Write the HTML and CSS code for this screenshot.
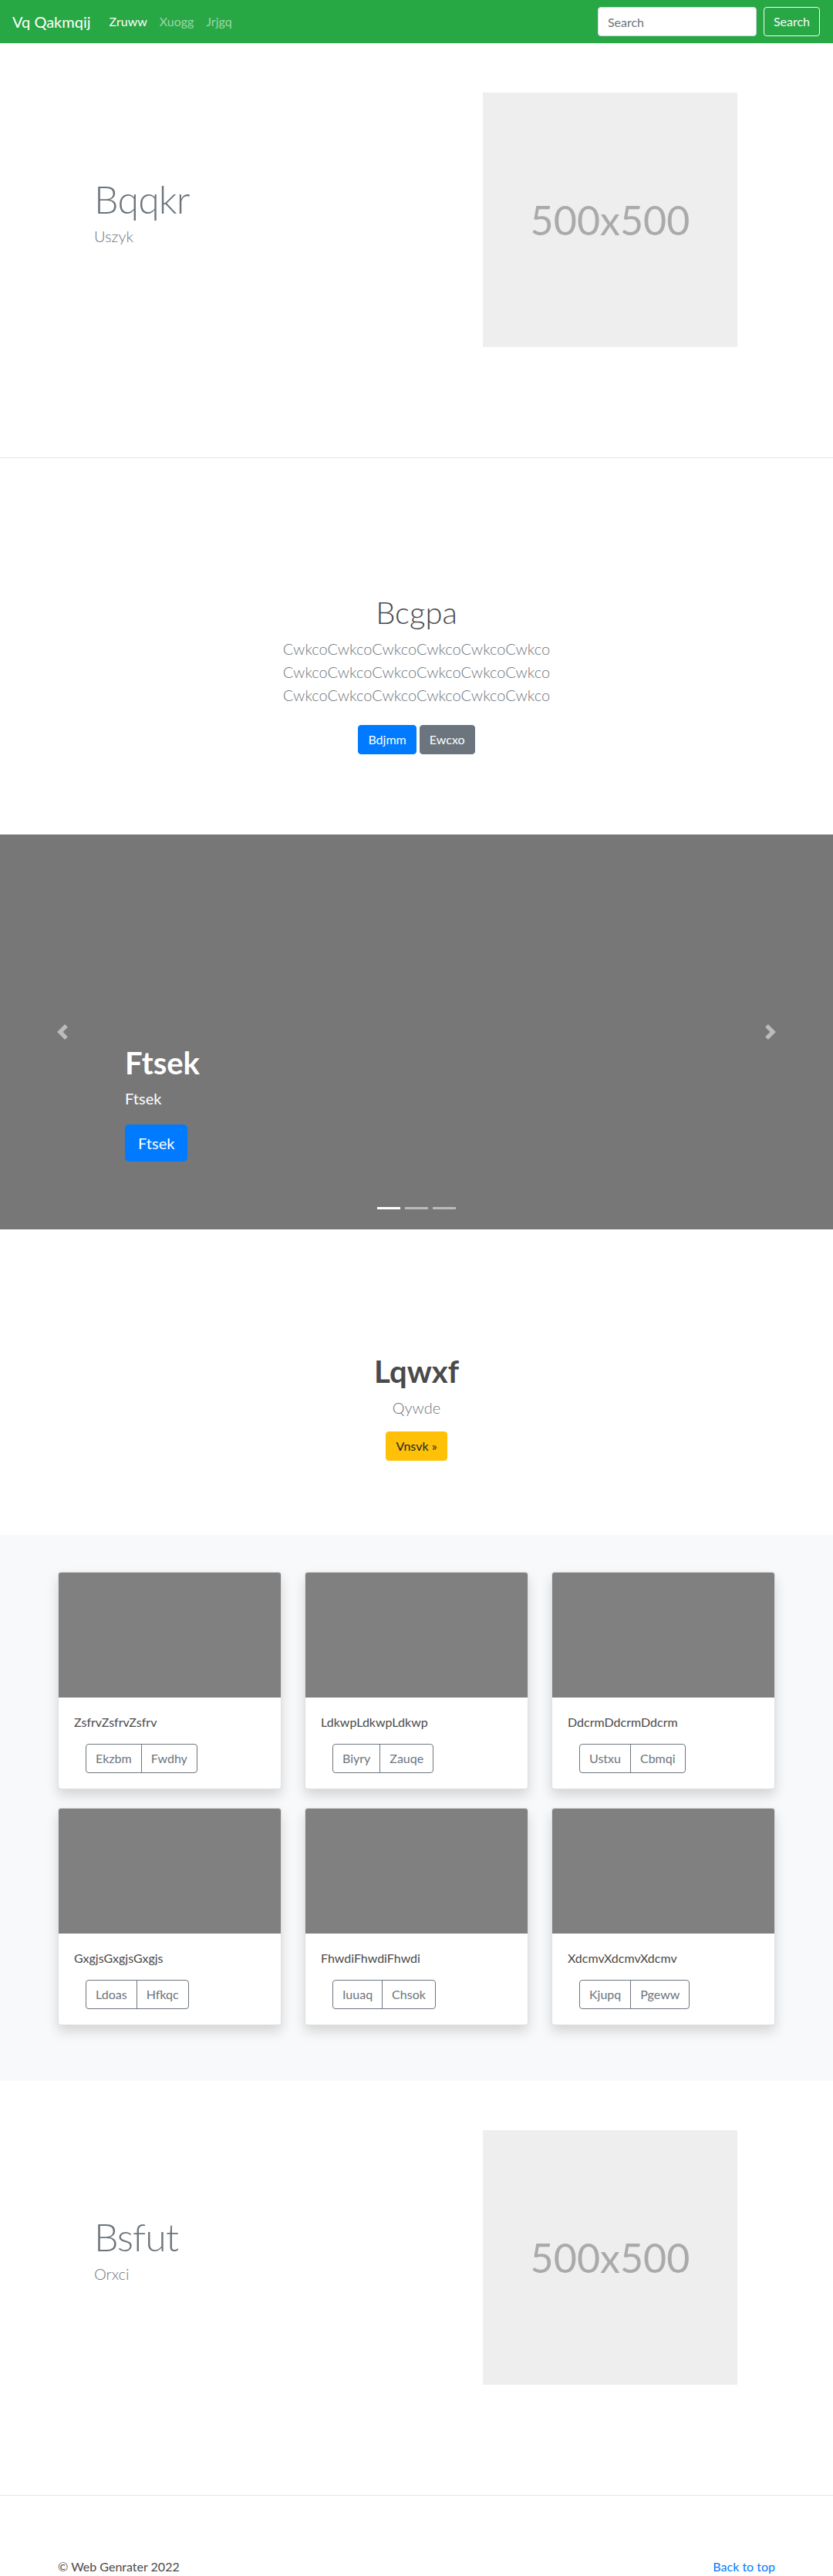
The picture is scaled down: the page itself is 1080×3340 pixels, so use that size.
FILE: index.html
```html
<!DOCTYPE html>
<html lang="en">
<head>
<meta charset="utf-8">
<title>Vq Qakmqij</title>
<link rel="stylesheet" href="styles.css">
</head>
<body>
<nav class="navbar">
  <a class="brand" href="#">Vq Qakmqij</a>
  <ul class="nav">
    <li><a class="active" href="#">Zruww</a></li>
    <li><a href="#">Xuogg</a></li>
    <li><a href="#">Jrjgq</a></li>
  </ul>
  <form class="search">
    <input class="search-input" type="text" placeholder="Search">
    <button class="btn btn-outline-light" type="button">Search</button>
  </form>
</nav>

<section class="featurette">
  <div class="container feat-row">
    <div class="feat-text">
      <h2 class="feat-heading">Bqqkr</h2>
      <p class="lead muted">Uszyk</p>
    </div>
    <div class="placeholder">500x500</div>
  </div>
</section>

<hr class="divider">

<section class="jumbotron">
  <div class="container center">
    <h1 class="jumbo-heading">Bcgpa</h1>
    <p class="lead muted">CwkcoCwkcoCwkcoCwkcoCwkcoCwkco<br>CwkcoCwkcoCwkcoCwkcoCwkcoCwkco<br>CwkcoCwkcoCwkcoCwkcoCwkcoCwkco</p>
    <p class="jumbo-actions"><a class="btn btn-primary" href="#">Bdjmm</a> <a class="btn btn-secondary" href="#">Ewcxo</a></p>
  </div>
</section>

<div class="carousel">
  <ol class="indicators">
    <li class="active"></li>
    <li></li>
    <li></li>
  </ol>
  <div class="caption">
    <h1 class="caption-title">Ftsek</h1>
    <p class="caption-text">Ftsek</p>
    <p class="caption-action"><a class="btn btn-lg btn-primary" href="#">Ftsek</a></p>
  </div>
  <a class="control control-prev" href="#">
    <svg width="20" height="20" viewBox="0 0 8 8"><path fill="#fff" d="M5.25 0l-4 4 4 4 1.5-1.5L4.25 4l2.5-2.5L5.25 0z"/></svg>
  </a>
  <a class="control control-next" href="#">
    <svg width="20" height="20" viewBox="0 0 8 8"><path fill="#fff" d="M2.75 0l-1.5 1.5L3.75 4l-2.5 2.5L2.75 8l4-4-4-4z"/></svg>
  </a>
</div>

<section class="callout">
  <div class="container center">
    <h1 class="callout-heading">Lqwxf</h1>
    <p class="lead muted">Qywde</p>
    <p class="callout-action"><a class="btn btn-warning" href="#">Vnsvk &raquo;</a></p>
  </div>
</section>

<section class="album">
  <div class="container card-grid">
    <div class="card">
      <div class="card-img"></div>
      <div class="card-body">
        <p class="card-text">ZsfrvZsfrvZsfrv</p>
        <div class="btn-group"><a class="btn btn-outline-secondary" href="#">Ekzbm</a><a class="btn btn-outline-secondary" href="#">Fwdhy</a></div>
      </div>
    </div>
    <div class="card">
      <div class="card-img"></div>
      <div class="card-body">
        <p class="card-text">LdkwpLdkwpLdkwp</p>
        <div class="btn-group"><a class="btn btn-outline-secondary" href="#">Biyry</a><a class="btn btn-outline-secondary" href="#">Zauqe</a></div>
      </div>
    </div>
    <div class="card">
      <div class="card-img"></div>
      <div class="card-body">
        <p class="card-text">DdcrmDdcrmDdcrm</p>
        <div class="btn-group"><a class="btn btn-outline-secondary" href="#">Ustxu</a><a class="btn btn-outline-secondary" href="#">Cbmqi</a></div>
      </div>
    </div>
    <div class="card">
      <div class="card-img"></div>
      <div class="card-body">
        <p class="card-text">GxgjsGxgjsGxgjs</p>
        <div class="btn-group"><a class="btn btn-outline-secondary" href="#">Ldoas</a><a class="btn btn-outline-secondary" href="#">Hfkqc</a></div>
      </div>
    </div>
    <div class="card">
      <div class="card-img"></div>
      <div class="card-body">
        <p class="card-text">FhwdiFhwdiFhwdi</p>
        <div class="btn-group"><a class="btn btn-outline-secondary" href="#">Iuuaq</a><a class="btn btn-outline-secondary" href="#">Chsok</a></div>
      </div>
    </div>
    <div class="card">
      <div class="card-img"></div>
      <div class="card-body">
        <p class="card-text">XdcmvXdcmvXdcmv</p>
        <div class="btn-group"><a class="btn btn-outline-secondary" href="#">Kjupq</a><a class="btn btn-outline-secondary" href="#">Pgeww</a></div>
      </div>
    </div>
  </div>
</section>

<section class="featurette">
  <div class="container feat-row">
    <div class="feat-text">
      <h2 class="feat-heading">Bsfut</h2>
      <p class="lead muted">Orxci</p>
    </div>
    <div class="placeholder">500x500</div>
  </div>
</section>

<hr class="divider">

<footer class="container footer">
  <p class="back"><a href="#">Back to top</a></p>
  <p class="copy">&copy; Web Genrater 2022</p>
</footer>
</body>
</html>
```

FILE: styles.css
```css
* { box-sizing: border-box; }
html, body { margin: 0; padding: 0; }
body {
  font-family: Lato, "Noto Sans", "Liberation Sans", sans-serif;
  font-size: 16px;
  line-height: 1.5;
  color: #4a4a4a;
  background: #fff;
}
h1, h2, p { margin: 0; }
a { text-decoration: none; }

.container { width: 960px; margin: 0 auto; padding: 0 15px; }
.center { text-align: center; }
.muted { color: #6c757d; }
.lead { font-size: 20px; font-weight: 300; line-height: 1.5; }

/* navbar */
.navbar {
  display: flex;
  align-items: center;
  height: 56px;
  padding: 0 17px 0 16px;
  background: #28a745;
}
.brand { font-size: 20px; line-height: 30px; color: #fff; margin-right: 16px; }
.nav { display: flex; list-style: none; margin: 0; padding: 0; }
.nav a { display: block; padding: 8px; color: rgba(255,255,255,.55); }
.nav a.active { color: #fff; }
.search { margin-left: auto; display: flex; align-items: center; margin-top: 0; }
.search-input {
  width: 206px; height: 38px; padding: 6px 12px;
  font-family: inherit; font-size: 16px; color: #495057;
  border: 1px solid #ced4da; border-radius: 4px; margin-right: 9px; background: #fff;
}
.search-input::placeholder { color: #6c757d; }

/* buttons */
.btn {
  display: inline-block;
  padding: 6px 12px;
  font-family: inherit; font-size: 16px; line-height: 24px;
  border: 1px solid transparent; border-radius: 4px;
  vertical-align: middle;
  background: transparent;
}
.btn-lg { padding: 8px 16px; font-size: 20px; line-height: 30px; border-radius: 5px; }
.btn-primary { background: #007bff; border-color: #007bff; color: #fff; }
.btn-secondary { background: #6c757d; border-color: #6c757d; color: #fff; }
.btn-warning { background: #ffc107; border-color: #ffc107; color: #212529; }
.btn-outline-light { border-color: #f8f9fa; color: #f8f9fa; }
.btn-outline-secondary { border-color: #6c757d; color: #6c757d; }

/* featurette */
.featurette { padding: 64px 0 63px; }
.feat-row { display: flex; align-items: center; }
.feat-text { flex: 1; padding-left: 47px; }
.feat-heading {
  font-size: 50px; font-weight: 300; line-height: 1; letter-spacing: -0.8px;
  color: #6c757d; margin-bottom: 8px;
}
.feat-text .lead { margin-bottom: 16px; }
.placeholder {
  width: 330px; height: 330px; margin-right: 49px;
  background: #eee; color: #aaa;
  display: flex; align-items: center; justify-content: center;
  font-size: 52px; font-weight: 400;
}

.divider { margin: 80px 0; border: 0; border-top: 1px solid #e5e5e5; height: 0; }

/* jumbotron */
.jumbotron { padding: 96px 0; }
.jumbo-heading { font-size: 40px; font-weight: 300; line-height: 1.2; margin-bottom: 8px; color: #4a4a4a; }
.jumbotron .lead { margin-bottom: 16px; }
.jumbo-actions .btn { margin: 8px 0; }

/* carousel */
.carousel { position: relative; height: 512px; background: #777; margin-bottom: 64px; overflow: hidden; }
.caption {
  position: absolute; left: 15%; right: 15%; bottom: 48px;
  padding: 20px 0; color: #fff; text-align: left; z-index: 10;
}
.caption-title { font-size: 40px; font-weight: 700; line-height: 1.2; margin-bottom: 8px; }
.caption-text { font-size: 20px; line-height: 1.4; margin-bottom: 20px; }
.caption-action { margin-bottom: 20px; line-height: 1; }
.control {
  position: absolute; top: 0; bottom: 0; width: 15%;
  display: flex; align-items: center; justify-content: center;
  opacity: .5;
}
.control-prev { left: 0; }
.control-next { right: 0; }
.indicators {
  position: absolute; left: 0; right: 0; bottom: 0;
  display: flex; justify-content: center;
  list-style: none; margin: 0 15% 16px; padding: 0; z-index: 15;
}
.indicators li {
  box-sizing: content-box; width: 30px; height: 3px; margin: 0 3px;
  background: #fff; background-clip: padding-box;
  border-top: 10px solid transparent; border-bottom: 10px solid transparent;
  opacity: .5;
}
.indicators li.active { opacity: 1; }

/* callout */
.callout { padding: 96px 0; }
.callout-heading { font-size: 40px; font-weight: 700; line-height: 1.2; margin-bottom: 8px; color: #4a4a4a; }
.callout .lead { margin-bottom: 16px; }

/* album */
.album { background: #f8f9fa; padding: 48px 0; }
.card-grid { display: grid; grid-template-columns: repeat(3, 1fr); column-gap: 30px; }
.card {
  background: #fff; border: 1px solid rgba(0,0,0,.125); border-radius: 4px;
  box-shadow: 0 8px 16px rgba(0,0,0,.15);
  margin-bottom: 24px; overflow: hidden;
}
.card-img { height: 162px; background: #808080; }
.card-body { padding: 20px; }
.card-text { margin-bottom: 16px; color: #4a4a4a; }
.btn-group { display: inline-flex; margin-left: 15px; }
.btn-group .btn { border-radius: 0; }
.btn-group .btn:first-child { border-radius: 4px 0 0 4px; }
.btn-group .btn:last-child { border-radius: 0 4px 4px 0; margin-left: -1px; }

/* footer */
.footer { padding-bottom: 48px; }
.footer p { margin-bottom: 16px; color: #4a4a4a; }
.back { float: right; }
.back a { color: #007bff; }
```
